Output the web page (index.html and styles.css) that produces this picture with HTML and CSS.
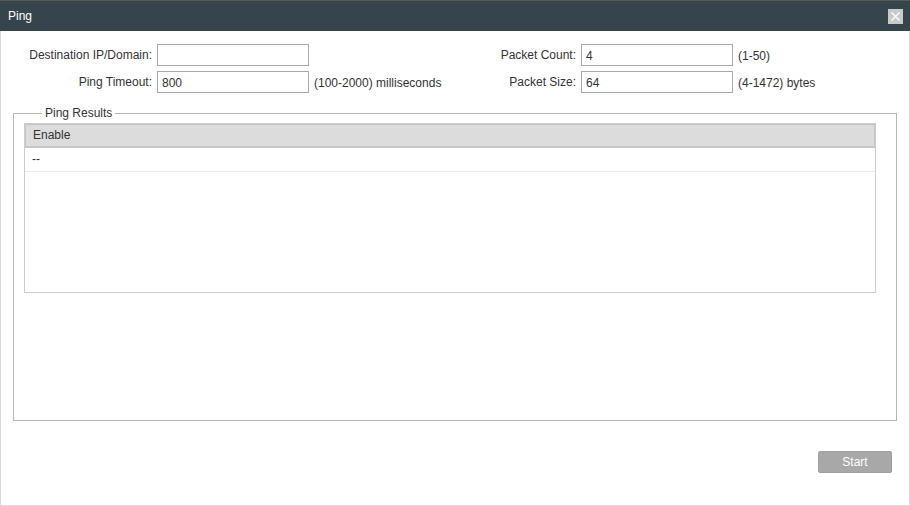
FILE: index.html
```html
<!DOCTYPE html>
<html lang="en">
<head>
    <meta charset="UTF-8">
    <title>Ping</title>
    <link rel="stylesheet" href="styles.css">
</head>
<body>

    <div class="dialog">
        <div class="title-bar">
            <span class="title">Ping</span>
            <button class="close-btn" title="Close">
                <svg width="9" height="9" viewBox="0 0 9 9"><path d="M0.5 0.5 L8.5 8.5 M8.5 0.5 L0.5 8.5" stroke="#fff" stroke-width="1.2" fill="none"/></svg>
            </button>
        </div>

        <div class="dialog-body">
            <div class="form-grid">
                <label class="label-left" for="dest">Destination IP/Domain:</label>
                <input type="text" id="dest">
                <span class="hint"></span>
                <label class="label-right" for="count">Packet Count:</label>
                <input type="text" id="count" value="4">
                <span class="hint">(1-50)</span>

                <label class="label-left" for="timeout">Ping Timeout:</label>
                <input type="text" id="timeout" value="800">
                <span class="hint">(100-2000) milliseconds</span>
                <label class="label-right" for="size">Packet Size:</label>
                <input type="text" id="size" value="64">
                <span class="hint">(4-1472) bytes</span>
            </div>

            <fieldset class="results">
                <legend>Ping Results</legend>
                <div class="result-table">
                    <div class="table-head">Enable</div>
                    <div class="table-row">--</div>
                </div>
            </fieldset>

            <div class="actions">
                <button class="start-btn">Start</button>
            </div>
        </div>
    </div>

</body>
</html>
```

FILE: styles.css
```css
body {
    margin: 0;
    padding: 0;
    font-family: "Liberation Sans", Arial, sans-serif;
    font-size: 12px;
    color: #333;
    background-color: #fff;
}
.dialog {
    width: 910px;
    height: 506px;
    box-sizing: border-box;
    border: 1px solid #d9d9d9;
    border-top: none;
    background-color: #fff;
}
.title-bar {
    height: 30px;
    margin: 0 -1px;
    border-top: 1px solid #5a5a5a;
    background-color: #36454c;
    display: flex;
    align-items: center;
    justify-content: space-between;
    padding: 0 7px 0 8px;
}
.title {
    color: #fff;
    font-size: 12px;
}
.close-btn {
    width: 15px;
    height: 15px;
    padding: 0;
    border: none;
    background-color: #c8cbcc;
    display: flex;
    align-items: center;
    justify-content: center;
    cursor: pointer;
}
.dialog-body {
    padding: 13px 12px 0 12px;
}
.form-grid {
    display: grid;
    grid-template-columns: 144px 152px 130px 142px 152px auto;
    grid-auto-rows: 22px;
    row-gap: 5px;
    align-items: center;
}
.label-left, .label-right {
    text-align: right;
    padding-right: 5px;
    white-space: nowrap;
}
.form-grid input {
    box-sizing: border-box;
    width: 152px;
    height: 22px;
    margin: 0;
    padding: 1px 4px 0 4px;
    border: 1px solid #a9a9a9;
    font-family: "Liberation Sans", Arial, sans-serif;
    font-size: 12px;
    color: #333;
}
.hint {
    padding-left: 5px;
    padding-top: 1px;
    white-space: nowrap;
}
.results {
    box-sizing: border-box;
    height: 315px;
    margin: 13px 0 0 0;
    padding: 3px 20px 0 10px;
    border: 1px solid #b4b4c8;
}
.results legend {
    margin-left: 18px;
    padding: 0 3px;
    line-height: 14px;
}
.result-table {
    height: 170px;
    box-sizing: border-box;
    border: 1px solid #cccccc;
}
.table-head {
    height: 24px;
    box-sizing: border-box;
    border: 1px solid #c6c6c6;
    border-bottom-width: 2px;
    background-color: #dcdcdc;
    padding-left: 7px;
    line-height: 21px;
}
.table-row {
    height: 24px;
    box-sizing: border-box;
    border-bottom: 1px solid #ececec;
    padding-left: 7px;
    line-height: 22px;
}
.actions {
    display: flex;
    justify-content: flex-end;
    padding: 30px 5px 0 0;
}
.start-btn {
    width: 74px;
    height: 22px;
    border: 1px solid #a0a0a0;
    border-radius: 2px;
    background-color: #a8a8a8;
    color: #fff;
    font-family: "Liberation Sans", Arial, sans-serif;
    font-size: 12px;
    cursor: pointer;
}
```
